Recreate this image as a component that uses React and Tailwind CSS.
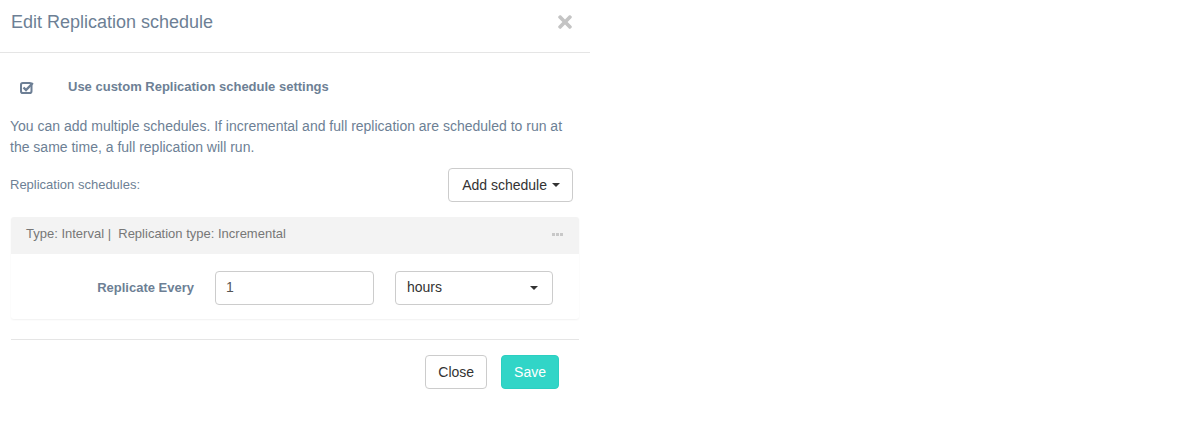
import { FaTimes } from 'react-icons/fa';

function CheckIcon() {
  return (
    <svg width="14" height="13" viewBox="0 0 14 13" className="block">
      <rect x="1" y="2" width="10.5" height="10" rx="1.8" fill="none" stroke="#6d7f95" strokeWidth="2" />
      <path d="M3.5 6.5 L6 9 L12.8 2" fill="none" stroke="#6d7f95" strokeWidth="2.4" />
    </svg>
  );
}

export default function App() {
  return (
    <div className="w-[1200px] h-[421px] bg-white font-['Liberation_Sans',Arial,sans-serif]">
      <div className="w-[590px]">
        {/* header */}
        <div className="h-[53px] flex items-center justify-between pl-[11px] pr-[15px] border-b border-[#e5e5e5]">
          <h4 className="text-[18px] text-[#6d7f95] -mt-[7px]">Edit Replication schedule</h4>
          <FaTimes className="text-[#c4c4c4] text-[20px] -mt-[8px]" />
        </div>

        {/* body */}
        <div className="px-[11px]">
          <div className="flex items-center h-[20px] mt-[24px]">
            <div className="w-[57px] pl-[9px]">
              <CheckIcon />
            </div>
            <span className="text-[13px] font-bold text-[#6d7f95]">Use custom Replication schedule settings</span>
          </div>

          <p className="mt-[19px] -ml-px text-[14px] leading-[21px] text-[#6d7f95] w-[570px]">
            You can add multiple schedules. If incremental and full replication are scheduled to run at the same time, a full replication will run.
          </p>

          <div className="flex items-center justify-between mt-[10px] h-[34px] pr-[6px]">
            <span className="text-[13px] text-[#6d7f95] -ml-px">Replication schedules:</span>
            <button className="h-[34px] pl-[13px] pr-[12px] border border-[#ccc] rounded-[4px] text-[14px] text-[#333] flex items-center gap-[5px]">
              Add schedule
              <span className="w-0 h-0 border-x-[4px] border-x-transparent border-t-[4px] border-t-[#333]"></span>
            </button>
          </div>

          {/* schedule card */}
          <div className="mt-[15px] w-[568px] rounded-[3px] shadow-[0_1px_2px_rgba(0,0,0,0.06)]">
            <div className="h-[37px] bg-[#f3f3f3] flex items-center justify-between pl-[15px] pr-[16px] rounded-t-[3px]">
              <span className="text-[13px] text-[#777] -mt-[4px]">Type: Interval |&nbsp; Replication type: Incremental</span>
              <span className="flex gap-[1px] -mt-[2px]">
                <span className="w-[3px] h-[3px] bg-[#c8c8c8]"></span>
                <span className="w-[3px] h-[3px] bg-[#c8c8c8]"></span>
                <span className="w-[3px] h-[3px] bg-[#c8c8c8]"></span>
              </span>
            </div>
            <div className="h-[65px] flex items-center">
              <label className="w-[183px] text-right text-[13px] font-bold text-[#6d7f95] mt-[2px]">Replicate Every</label>
              <div className="ml-[21px] w-[159px] h-[34px] border border-[#ccc] rounded-[4px] px-[10px] flex items-center text-[14px] text-[#555] mt-[2px]">1</div>
              <div className="ml-[21px] w-[158px] h-[34px] border border-[#ccc] rounded-[4px] pl-[11px] pr-[14px] flex items-center justify-between text-[14px] text-[#333] mt-[2px]">
                hours
                <span className="w-0 h-0 border-x-[4px] border-x-transparent border-t-[4px] border-t-[#333]"></span>
              </div>
            </div>
          </div>

          {/* footer */}
          <div className="mt-[20px] border-t border-[#e5e5e5] w-[568px] pt-[15px] flex justify-end gap-[14px] pr-[20px]">
            <button className="h-[34px] px-[12px] border border-[#ccc] rounded-[4px] text-[14px] text-[#333] bg-white">Close</button>
            <button className="h-[34px] px-[12px] rounded-[4px] text-[14px] text-white bg-[#31d5c7] border border-[#2bcfc1]">Save</button>
          </div>
        </div>
      </div>
    </div>
  );
}
